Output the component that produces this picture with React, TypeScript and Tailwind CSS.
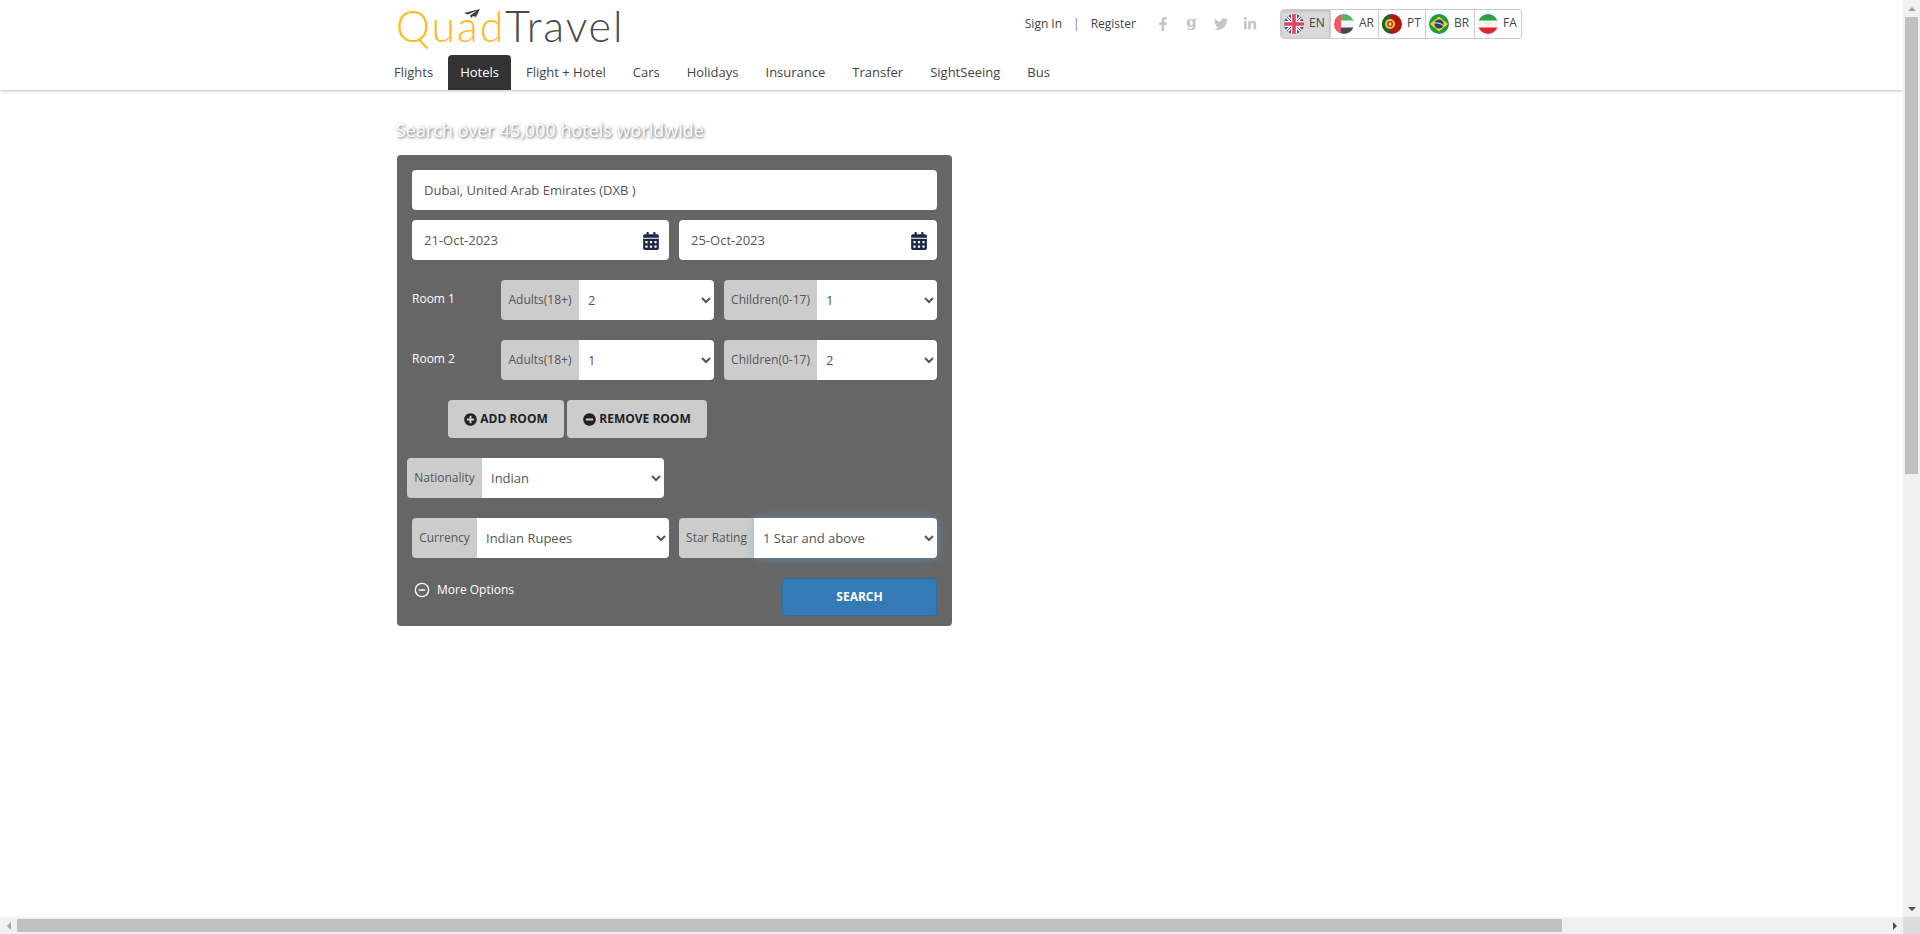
import React from 'react';
import { FaCalendarAlt, FaFacebookF, FaTwitter, FaLinkedinIn, FaPlusCircle, FaMinusCircle } from 'react-icons/fa';
import { FiMinusCircle } from 'react-icons/fi';

const navItems = ['Flights', 'Hotels', 'Flight + Hotel', 'Cars', 'Holidays', 'Insurance', 'Transfer', 'SightSeeing', 'Bus'];

const FlagCircle: React.FC<{ id: string; children: React.ReactNode }> = ({ id, children }) => (
    <svg width="20" height="20" viewBox="0 0 20 20" className="shrink-0">
        <clipPath id={id}><circle cx="10" cy="10" r="10" /></clipPath>
        <g clipPath={`url(#${id})`}>{children}</g>
    </svg>
);

const languages: { code: string; width: string; flag: React.ReactNode }[] = [
    {
        code: 'EN',
        width: 'w-[49px] bg-[#d9d9d9] shadow-[inset_0_1px_3px_rgba(0,0,0,0.15)]',
        flag: (
            <FlagCircle id="flag-en">
                <rect width="20" height="20" fill="#41479b" />
                <path d="M0 0L20 20M20 0L0 20" stroke="#f5f5f5" strokeWidth="3.5" />
                <path d="M0 0L20 20M20 0L0 20" stroke="#d8455f" strokeWidth="1" />
                <path d="M10 0V20M0 10H20" stroke="#f5f5f5" strokeWidth="6" />
                <path d="M10 0V20M0 10H20" stroke="#d8455f" strokeWidth="3.5" />
            </FlagCircle>
        ),
    },
    {
        code: 'AR',
        width: 'w-[48px]',
        flag: (
            <FlagCircle id="flag-ar">
                <rect width="20" height="20" fill="#f5f5f5" />
                <rect width="20" height="6.5" fill="#4fb860" />
                <rect y="13.5" width="20" height="6.5" fill="#464655" />
                <rect width="7" height="20" fill="#f25a6a" />
            </FlagCircle>
        ),
    },
    {
        code: 'PT',
        width: 'w-[47px]',
        flag: (
            <FlagCircle id="flag-pt">
                <rect width="20" height="20" fill="#b3150f" />
                <rect width="8" height="20" fill="#0f6b2e" />
                <circle cx="8" cy="10" r="5" fill="#f5d020" />
                <circle cx="8" cy="10" r="3" fill="#d92a1c" />
                <circle cx="8" cy="10" r="1.5" fill="#f5f5f5" />
            </FlagCircle>
        ),
    },
    {
        code: 'BR',
        width: 'w-[49px]',
        flag: (
            <FlagCircle id="flag-br">
                <rect width="20" height="20" fill="#1c9a3f" />
                <path d="M10 2.5L19 10L10 17.5L1 10Z" fill="#f7d117" />
                <circle cx="10" cy="10" r="4.6" fill="#27407e" />
                <path d="M5.5 9C8.5 8.5 12 9.5 14.5 11.5" stroke="#f5f5f5" strokeWidth="1" fill="none" />
            </FlagCircle>
        ),
    },
    {
        code: 'FA',
        width: 'w-[47px]',
        flag: (
            <FlagCircle id="flag-fa">
                <rect width="20" height="20" fill="#f5f5f5" />
                <rect width="20" height="6.5" fill="#2f9e46" />
                <rect y="13.5" width="20" height="6.5" fill="#e0252d" />
                <path d="M8 8.8C8.5 11 11.5 11 12 8.8L10.8 10.4H9.2Z" fill="#e0252d" />
            </FlagCircle>
        ),
    },
];

const SelectGroup: React.FC<{
    label: string;
    value: string;
    className: string;
    labelWidth: string;
    focused?: boolean;
}> = ({ label, value, className, labelWidth, focused }) => (
    <div className={`flex h-10 rounded-[4px] ${className}`}>
        <span className={`flex items-center justify-center shrink-0 bg-[#cccccc] text-[#555555] text-[12px] rounded-l-[4px] ${labelWidth}`}>{label}</span>
        <select
            defaultValue={value}
            className={`flex-1 min-w-0 h-10 bg-white text-[#555555] text-[13px] pl-[5px] rounded-r-[4px] outline-none ${focused ? 'relative shadow-[0_0_8px_rgba(102,175,233,0.6)]' : ''}`}
        >
            <option>{value}</option>
        </select>
    </div>
);

const DateField: React.FC<{ value: string; className: string }> = ({ value, className }) => (
    <div className={`flex items-center h-10 bg-white rounded-[4px] pl-3 pr-[9px] text-[13px] text-[#555555] ${className}`}>
        <span className="flex-1 pt-px">{value}</span>
        <FaCalendarAlt className="text-[#1c2a4a] text-[18px] mt-[2px]" />
    </div>
);

const RoomRow: React.FC<{ room: string; adults: string; children: string }> = ({ room, adults, children }) => (
    <div className="flex items-center">
        <span className="w-[89px] text-white text-[12px] -mt-[3px]">{room}</span>
        <SelectGroup label="Adults(18+)" value={adults} className="w-[213px]" labelWidth="w-[78px]" />
        <SelectGroup label="Children(0-17)" value={children} className="w-[213px] ml-[10px]" labelWidth="w-[93px]" />
    </div>
);

const App: React.FC = () => (
    <div className="flex flex-col h-[934px] overflow-hidden bg-white font-['Open_Sans',sans-serif]">
        <div className="flex flex-1 min-h-0">
            <main className="flex-1 min-w-0">
                <header className="h-[90px] bg-white shadow-[0_1px_3px_rgba(0,0,0,0.25)] pl-[396px]">
                    <div className="flex h-[55px] w-[1126px]">
                        <div className="relative h-[55px] w-[300px] font-['Lato',sans-serif] font-light text-[43px] tracking-[1.9px] leading-[55px] -mt-[2px]">
                            <span className="text-[#fdb924]">Quad</span>
                            <span className="text-[#4a4a4a]">Travel</span>
                            <svg className="absolute left-[68px] top-[11px]" width="16" height="9" viewBox="0 0 16 9">
                                <path d="M16 0L0 4L4 5.5L13 1.5L6 6.5L7 9L9 7L12 8Z" fill="#3f3f3f" />
                            </svg>
                        </div>
                        <div className="flex flex-1 justify-end items-start">
                            <div className="flex items-center h-[30px] mt-[9px] text-[12px] text-[#444444]">
                                <span>Sign In</span>
                                <span className="mx-[11px] text-[#777777]">|</span>
                                <span>Register</span>
                                <div className="flex items-center ml-[12px] mr-[16px] text-[#c4c4c4] text-[14px]">
                                    <span className="flex justify-center w-[29px]"><FaFacebookF /></span>
                                    <span className="w-[29px] text-center font-['DejaVu_Serif',serif] font-bold text-[15px] leading-none -mt-1">g</span>
                                    <span className="flex justify-center w-[29px]"><FaTwitter /></span>
                                    <span className="flex justify-center w-[29px]"><FaLinkedinIn /></span>
                                </div>
                                <div className="flex h-[30px] border border-[#cccccc] rounded-[4px] overflow-hidden">
                                    {languages.map((lang, i) => (
                                        <div key={lang.code} className={`flex items-center gap-[5px] pl-[3px] text-[12px] text-[#444444] ${lang.width} ${i > 0 ? 'border-l border-[#cccccc]' : ''}`}>
                                            {lang.flag}
                                            <span className="-mt-[2px]">{lang.code}</span>
                                        </div>
                                    ))}
                                </div>
                            </div>
                        </div>
                    </div>
                    <nav className="flex h-[35px] -ml-[14px] text-[13px] text-[#444444]">
                        {navItems.map((item) => (
                            <a key={item} className={`flex items-center px-3 mr-[3px] rounded-t-[4px] ${item === 'Hotels' ? 'bg-[#333333] text-white' : ''}`}>{item}</a>
                        ))}
                    </nav>
                </header>

                <div className="pl-[396px]">
                    <h2 className="mt-[27px] h-[26px] leading-[26px] text-[18px] text-white [text-shadow:1px_1px_3px_#555555]">Search over 45,000 hotels worldwide</h2>
                    <form className="mt-[12px] ml-px w-[555px] h-[471px] bg-[#666666] rounded-[4px] px-[15px] pt-[15px]">
                        <div className="flex items-center h-10 bg-white rounded-[4px] pl-3 pt-px text-[13px] text-[#555555]">Dubai, United Arab Emirates (DXB )</div>
                        <div className="flex gap-[10px] mt-[10px]">
                            <DateField value="21-Oct-2023" className="w-[257px]" />
                            <DateField value="25-Oct-2023" className="flex-1" />
                        </div>
                        <div className="flex flex-col gap-5 mt-5">
                            <RoomRow room="Room 1" adults="2" children="1" />
                            <RoomRow room="Room 2" adults="1" children="2" />
                        </div>
                        <div className="flex gap-[3px] mt-5 ml-[36px]">
                            <button type="button" className="flex items-center justify-center gap-[3px] w-[116px] h-[38px] bg-[#cccccc] rounded-[4px] text-[12px] font-bold text-[#222222]">
                                <FaPlusCircle className="text-[13px]" />ADD ROOM
                            </button>
                            <button type="button" className="flex items-center justify-center gap-[3px] w-[140px] h-[38px] bg-[#cccccc] rounded-[4px] text-[12px] font-bold text-[#222222]">
                                <FaMinusCircle className="text-[13px]" />REMOVE ROOM
                            </button>
                        </div>
                        <SelectGroup label="Nationality" value="Indian" className="w-[257px] mt-5 -ml-[5px]" labelWidth="w-[75px]" />
                        <div className="flex gap-[10px] mt-5">
                            <SelectGroup label="Currency" value="Indian Rupees" className="w-[257px]" labelWidth="w-[65px]" />
                            <SelectGroup label="Star Rating" value="1 Star and above" className="flex-1" labelWidth="w-[75px]" focused />
                        </div>
                        <div className="flex justify-between mt-5">
                            <div className="flex items-center gap-[7px] h-[24px] pl-[2px] text-white text-[12px]">
                                <FiMinusCircle className="text-[16px]" />
                                <span>More Options</span>
                            </div>
                            <button type="button" className="w-[155px] h-[38px] bg-[#337ab7] border border-[#2e6da4] rounded-[4px] text-white text-[12px] font-bold">SEARCH</button>
                        </div>
                    </form>
                </div>
            </main>
            {/* vertical scrollbar */}
            <div className="flex flex-col w-[17px] bg-[#f1f1f1]">
                <div className="flex items-center justify-center h-[17px] shrink-0">
                    <span className="border-x-[4px] border-x-transparent border-b-[4px] border-b-[#a3a3a3]" />
                </div>
                <div className="mx-[2px] h-[457px] bg-[#c1c1c1]" />
                <div className="flex items-center justify-center h-[17px] shrink-0 mt-auto">
                    <span className="border-x-[4px] border-x-transparent border-t-[4px] border-t-[#505050]" />
                </div>
            </div>
        </div>
        {/* horizontal scrollbar */}
        <div className="flex items-center h-[17px] shrink-0 bg-[#f1f1f1]">
            <div className="flex items-center justify-center w-[17px] h-[17px] shrink-0">
                <span className="border-y-[4px] border-y-transparent border-r-[4px] border-r-[#a3a3a3]" />
            </div>
            <div className="w-[1545px] h-[13px] bg-[#c1c1c1]" />
            <div className="flex items-center justify-center w-[17px] h-[17px] ml-auto">
                <span className="border-y-[4px] border-y-transparent border-l-[4px] border-l-[#505050]" />
            </div>
            <div className="w-[17px] h-[17px] bg-[#dcdcdc]" />
        </div>
    </div>
);

export default App;
